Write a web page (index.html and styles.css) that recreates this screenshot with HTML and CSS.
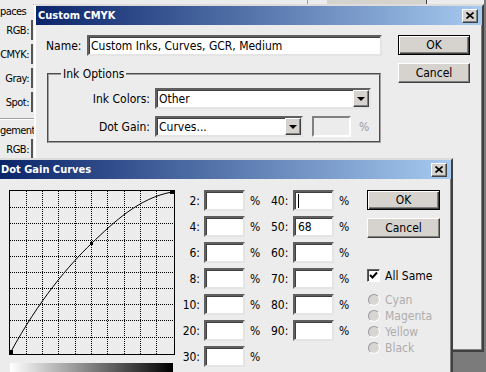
FILE: index.html
```html
<!DOCTYPE html>
<html lang="en">
  <head>
    <meta charset="UTF-8" />
    <title>Custom CMYK</title>
    <link rel="stylesheet" href="styles.css">
  </head>
  <body>
    <!-- color settings window, mostly hidden behind the dialogs -->
    <div class="back-win">
      <div class="back-top">
        <span class="back-edge"></span>
        <span class="back-btn"></span>
      </div>
      <div class="back-row back-head"><span class="back-title">paces</span><span class="back-line"></span></div>
      <div class="back-row"><span class="back-lbl">RGB:</span><span class="back-field"></span></div>
      <div class="back-row"><span class="back-lbl">CMYK:</span><span class="back-field"></span></div>
      <div class="back-row"><span class="back-lbl">Gray:</span><span class="back-field"></span></div>
      <div class="back-row"><span class="back-lbl">Spot:</span><span class="back-field"></span></div>
      <div class="back-sep"></div>
      <div class="back-row back-head"><span class="back-title">gement</span></div>
      <div class="back-row"><span class="back-lbl">RGB:</span><span class="back-field"></span></div>
    </div>

    <div class="win cmyk-win">
      <div class="titlebar">
        <span class="title">Custom CMYK</span>
        <span class="close-btn">
          <svg width="8" height="7" viewBox="0 0 8 7"><path d="M0.5 0.5 L7.5 6.5 M7.5 0.5 L0.5 6.5" stroke="#000" stroke-width="1.6"/></svg>
        </span>
      </div>
      <div class="cmyk-body">
        <div class="cmyk-main">
          <div class="name-row">
            <label class="name-lbl">Name:</label>
            <div class="field name-field">Custom Inks, Curves, GCR, Medium</div>
          </div>
          <fieldset class="group">
            <legend>Ink Options</legend>
            <div class="opt-row">
              <label class="opt-lbl">Ink Colors:</label>
              <div class="field select ink-select">Other<span class="drop"><span class="arrow"></span></span></div>
            </div>
            <div class="opt-row">
              <label class="opt-lbl">Dot Gain:</label>
              <div class="field select gain-select">Curves...<span class="drop"><span class="arrow"></span></span></div>
              <div class="field off-field"></div>
              <span class="off-pct">%</span>
            </div>
          </fieldset>
        </div>
        <div class="btn-col">
          <button class="btn default">OK</button>
          <button class="btn">Cancel</button>
        </div>
      </div>
    </div>

    <div class="win curves-win">
      <div class="titlebar">
        <span class="title">Dot Gain Curves</span>
        <span class="close-btn">
          <svg width="8" height="7" viewBox="0 0 8 7"><path d="M0.5 0.5 L7.5 6.5 M7.5 0.5 L0.5 6.5" stroke="#000" stroke-width="1.6"/></svg>
        </span>
      </div>
      <div class="curves-body">
        <div class="graph-col">
          <svg class="graph" width="166" height="165" viewBox="0 0 166 165">
            <rect x="0" y="0" width="166" height="165" fill="#ececec"/>
            <g stroke="#000" stroke-width="1" stroke-dasharray="1 1">
              <path d="M17.5 1V164 M33.5 1V164 M49.5 1V164 M66.5 1V164 M82.5 1V164 M98.5 1V164 M115.5 1V164 M131.5 1V164 M147.5 1V164"/>
              <path d="M1 17.5H165 M1 33.5H165 M1 50.5H165 M1 66.5H165 M1 82.5H165 M1 98.5H165 M1 114.5H165 M1 130.5H165 M1 147.5H165"/>
            </g>
            <rect x="0.5" y="0.5" width="165" height="164" fill="none" stroke="#000"/>
            <path d="M1.5 162.5 C30 110 60 75 82.5 53.5 C105 32 130 8 163 2" fill="none" stroke="#000"/>
            <rect x="0" y="160" width="4" height="4" fill="#000"/>
            <rect x="161" y="0" width="4" height="4" fill="#000"/>
            <rect x="81" y="52" width="3" height="3" fill="#000"/>
          </svg>
          <div class="grad-bar"></div>
        </div>

        <div class="fields">
          <span class="lbl">2:</span><span class="field cell"></span><span class="pct">%</span>
          <span class="lbl">40:</span><span class="field cell"><span class="caret"></span></span><span class="pct">%</span>
          <span class="lbl">4:</span><span class="field cell"></span><span class="pct">%</span>
          <span class="lbl">50:</span><span class="field cell">68</span><span class="pct">%</span>
          <span class="lbl">6:</span><span class="field cell"></span><span class="pct">%</span>
          <span class="lbl">60:</span><span class="field cell"></span><span class="pct">%</span>
          <span class="lbl">8:</span><span class="field cell"></span><span class="pct">%</span>
          <span class="lbl">70:</span><span class="field cell"></span><span class="pct">%</span>
          <span class="lbl">10:</span><span class="field cell"></span><span class="pct">%</span>
          <span class="lbl">80:</span><span class="field cell"></span><span class="pct">%</span>
          <span class="lbl">20:</span><span class="field cell"></span><span class="pct">%</span>
          <span class="lbl">90:</span><span class="field cell"></span><span class="pct">%</span>
          <span class="lbl">30:</span><span class="field cell"></span><span class="pct">%</span>
        </div>

        <div class="side">
          <button class="btn default">OK</button>
          <button class="btn cancel">Cancel</button>
          <div class="check-row">
            <span class="checkbox">
              <svg width="9" height="9" viewBox="0 0 9 9"><path d="M1 4 L3.5 6.5 L8 1.5" fill="none" stroke="#000" stroke-width="2"/></svg>
            </span>
            <span>All Same</span>
          </div>
          <div class="radios">
            <div class="radio-row"><span class="radio"></span><span>Cyan</span></div>
            <div class="radio-row"><span class="radio"></span><span>Magenta</span></div>
            <div class="radio-row"><span class="radio"></span><span>Yellow</span></div>
            <div class="radio-row"><span class="radio"></span><span>Black</span></div>
          </div>
        </div>
      </div>
    </div>
  </body>
</html>
```

FILE: styles.css
```css
* {
  margin: 0;
  padding: 0;
  box-sizing: border-box;
}

body {
  width: 486px;
  height: 372px;
  overflow: hidden;
  position: relative;
  background-color: #7b7b7b;
  font-family: "DejaVu Sans Condensed", "DejaVu Sans", sans-serif;
  font-stretch: condensed;
  font-size: 12px;
  color: #000;
}

/* background window */
.back-win {
  position: absolute;
  left: 0;
  top: 0;
  width: 484px;
  height: 352px;
  background-color: #ececec;
  display: flex;
  flex-direction: column;
}

.back-top {
  height: 4px;
  display: flex;
}

.back-edge {
  width: 1px;
  margin-left: 307px;
  background-color: #a0a0a0;
}

.back-btn {
  width: 100px;
  margin-left: 19px;
  background-color: #d6d3ce;
  border-right: 1px solid #404040;
}

.back-row {
  display: flex;
  height: 20px;
  align-items: center;
  margin-bottom: 4px;
}

.back-head {
  height: 14px;
  margin-bottom: 2px;
}

.back-row:first-of-type {
  margin-top: -1px;
}

.back-title {
  font-size: 11px;
  letter-spacing: -0.6px;
  white-space: nowrap;
}

.back-lbl {
  width: 29px;
  display: flex;
  justify-content: flex-end;
  white-space: nowrap;
  font-size: 11px;
  letter-spacing: -0.5px;
}

.back-line {
  width: 6px;
  height: 2px;
  margin-left: 7px;
  align-self: flex-start;
  border-top: 1px solid #a0a0a0;
  border-bottom: 1px solid #fff;
}

.back-field {
  width: 4px;
  height: 20px;
  margin-left: 2px;
  border-left: 2px solid #555;
}

.back-sep {
  width: 34px;
  height: 2px;
  margin: 2px 0 3px;
  border-top: 1px solid #a0a0a0;
  border-bottom: 1px solid #fff;
}

/* shared window chrome */
.win {
  position: absolute;
  background-color: #ececec;
  border: 2px solid;
  border-color: #dcdcdc #404040 #404040 #fff;
  box-shadow: inset -1px -1px #808080;
}

.cmyk-win {
  left: 34px;
  top: 4px;
  width: 450px;
  height: 348px;
}

.curves-win {
  left: -3px;
  top: 158px;
  width: 456px;
  height: 230px;
}

.titlebar {
  height: 19px;
  display: flex;
  align-items: center;
  justify-content: space-between;
  background: linear-gradient(to right, #0a246a, #a6caf0);
}

.title {
  color: #fff;
  font-weight: bold;
  font-size: 11px;
  padding-left: 2px;
}

.close-btn {
  width: 16px;
  height: 14px;
  margin-right: 4px;
  display: flex;
  align-items: center;
  justify-content: center;
  background-color: #d6d3ce;
  border: 1px solid;
  border-color: #fff #404040 #404040 #fff;
  box-shadow: inset -1px -1px #808080;
}

.close-btn svg {
  display: block;
}

/* controls */
.field {
  background-color: #fff;
  border: 2px solid;
  border-color: #606060 #e4e4e4 #e4e4e4 #606060;
  box-shadow: inset 1px 1px #404040;
  height: 21px;
  display: flex;
  align-items: center;
  padding-left: 2px;
  white-space: nowrap;
}

.btn {
  display: block;
  height: 20px;
  font: inherit;
  color: #000;
  background-color: #d6d3ce;
  border: 1px solid;
  border-color: #fff #404040 #404040 #fff;
  box-shadow: inset -1px -1px #808080;
}

.btn.default {
  border-color: #000;
  box-shadow: inset 1px 1px #fff, inset -1px -1px #404040, inset -2px -2px #808080;
}

.select {
  justify-content: space-between;
  padding-right: 0;
}

.drop {
  width: 16px;
  height: 17px;
  display: flex;
  align-items: center;
  justify-content: center;
  background-color: #d6d3ce;
  border: 1px solid;
  border-color: #fff #404040 #404040 #fff;
  box-shadow: inset -1px -1px #808080;
}

.arrow {
  width: 0;
  height: 0;
  border-left: 4px solid transparent;
  border-right: 4px solid transparent;
  border-top: 4px solid #000;
}

/* custom cmyk */
.cmyk-body {
  display: flex;
  padding: 10px 12px 0 10px;
}

.cmyk-main {
  width: 336px;
}

.name-row {
  display: flex;
  align-items: center;
}

.name-lbl {
  width: 41px;
}

.name-field {
  width: 295px;
}

.group {
  margin: 11px 0 0 1px;
  width: 333px;
  padding: 7px 8px 4px;
  border: 2px groove #f4f4f4;
  border-color: #a0a0a0;
}

.group legend {
  margin-left: 4px;
  padding: 0 2px;
  line-height: 14px;
}

.opt-row {
  display: flex;
  align-items: center;
  height: 21px;
}

.opt-row + .opt-row {
  margin-top: 7px;
}

.opt-lbl {
  width: 93px;
  text-align: right;
  margin-right: 5px;
}

.ink-select {
  width: 216px;
}

.gain-select {
  width: 148px;
}

.off-field {
  width: 39px;
  margin-left: 9px;
  background-color: #ececec;
  box-shadow: none;
  border-color: #808080 #fff #fff #808080;
}

.off-pct {
  margin-left: 8px;
  color: #9a9a9a;
}

.btn-col {
  margin-left: 16px;
  display: flex;
  flex-direction: column;
  gap: 8px;
}

.btn-col .btn {
  width: 72px;
}

/* dot gain curves */
.curves-body {
  display: flex;
  align-items: flex-start;
  padding: 11px 0 0 10px;
}

.graph-col {
  width: 166px;
  display: flex;
  flex-direction: column;
  gap: 8px;
}

.graph {
  display: block;
}

.grad-bar {
  margin-left: 1px;
  width: 163px;
  height: 14px;
  background: linear-gradient(to right, #fff, #000);
}

.fields {
  margin-left: 7px;
  display: grid;
  grid-template-columns: 22px 41px 26px 22px 41px 20px;
  grid-auto-rows: 21px;
  row-gap: 5px;
  align-items: center;
}

.fields .lbl {
  text-align: right;
  padding-right: 4px;
}

.fields .lbl:nth-child(6n+4) {
  padding-right: 5px;
}

.fields .cell {
  padding-left: 3px;
}

.fields .pct {
  padding-left: 5px;
}

.caret {
  width: 1px;
  height: 14px;
  background-color: #000;
}

.side {
  margin-left: 13px;
  width: 73px;
  display: flex;
  flex-direction: column;
}

.side .btn {
  width: 73px;
}

.side .cancel {
  margin-top: 8px;
}

.check-row {
  margin-top: 31px;
  display: flex;
  align-items: center;
  gap: 5px;
  height: 13px;
  white-space: nowrap;
}

.checkbox {
  width: 13px;
  height: 13px;
  display: flex;
  align-items: center;
  justify-content: center;
  background-color: #fff;
  border: 1px solid;
  border-color: #606060 #fff #fff #606060;
  box-shadow: inset 1px 1px #404040;
}

.radios {
  margin-top: 10px;
  display: flex;
  flex-direction: column;
}

.radio-row {
  height: 16px;
  display: flex;
  align-items: center;
  gap: 5px;
  color: #acacac;
}

.radio {
  width: 12px;
  height: 12px;
  margin-left: 1px;
  border-radius: 50%;
  background-color: #d8d6d2;
  border: 1px solid;
  border-color: #9a9a9a #fff #fff #9a9a9a;
}
```
